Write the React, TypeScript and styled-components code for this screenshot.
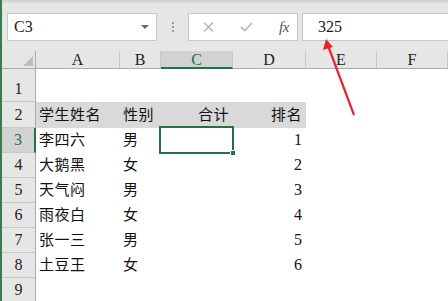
import styled, { createGlobalStyle } from 'styled-components';

const GlobalStyle = createGlobalStyle`
  * { box-sizing: border-box; }
  html, body { margin: 0; padding: 0; background: #fff; overflow: hidden; }
  body { font-family: "Liberation Serif", "Noto Sans CJK SC", serif; }
`;

const columns = ['A', 'B', 'C', 'D', 'E', 'F'];

const rows: { name?: string; sex?: string; total?: string; rank?: string; band?: boolean }[] = [
	{},
	{ name: '学生姓名', sex: '性别', total: '合计', rank: '排名', band: true },
	{ name: '李四六', sex: '男', rank: '1' },
	{ name: '大鹅黑', sex: '女', rank: '2' },
	{ name: '天气闷', sex: '男', rank: '3' },
	{ name: '雨夜白', sex: '女', rank: '4' },
	{ name: '张一三', sex: '男', rank: '5' },
	{ name: '土豆王', sex: '女', rank: '6' },
	{},
];

const selectedRow = 3;
const selectedCol = 'C';

const App = () => {
	return (
		<>
			<GlobalStyle />
			<Window>
				<TopStrip />
				<FormulaBar>
					<NameBox>
						<span>C3</span>
						<Caret />
					</NameBox>
					<Grip>
						<Dot />
						<Dot />
						<Dot />
					</Grip>
					<ButtonBox>
						<IconSlot>
							<svg width="11" height="10" viewBox="0 0 11 10">
								<path d="M1 0.5 L10 9.5 M10 0.5 L1 9.5" stroke="#b3b3b3" strokeWidth="1.4" fill="none" />
							</svg>
						</IconSlot>
						<IconSlot>
							<svg width="13" height="10" viewBox="0 0 13 10">
								<path d="M1 5 L4.8 8.6 L12 1" stroke="#bcbcbc" strokeWidth="1.8" fill="none" />
							</svg>
						</IconSlot>
						<FxLabel>fx</FxLabel>
					</ButtonBox>
					<FormulaInput>325</FormulaInput>
				</FormulaBar>

				<Sheet>
					<Corner>
						<svg width="10" height="10" viewBox="0 0 10 10">
							<polygon points="10,0 10,10 0,10" fill="#bdbdbd" />
						</svg>
					</Corner>
					{columns.map((c) => (
						<ColHead key={c} $active={c === selectedCol}>
							{c}
						</ColHead>
					))}

					{rows.map((r, i) => {
						const n = i + 1;
						return [
							<RowHead key={`h${n}`} $active={n === selectedRow}>
								{n}
							</RowHead>,
							<Cell key={`a${n}`} $band={r.band}>
								<CjkText>{r.name}</CjkText>
							</Cell>,
							<Cell key={`b${n}`} $band={r.band}>
								<CjkText>{r.sex}</CjkText>
							</Cell>,
							<Cell key={`c${n}`} $band={r.band} $right $selected={n === selectedRow}>
								<CjkText>{r.total}</CjkText>
								{n === selectedRow && (
									<Selection>
										<FillHandle />
									</Selection>
								)}
							</Cell>,
							<Cell key={`d${n}`} $band={r.band} $right>
								{r.band ? <CjkText>{r.rank}</CjkText> : r.rank}
							</Cell>,
							<Cell key={`e${n}`} />,
							<Cell key={`f${n}`} />,
						];
					})}
				</Sheet>

				<Arrow width="448" height="301" viewBox="0 0 448 301">
					<line x1="354" y1="115" x2="328.5" y2="47" stroke="#e8212b" strokeWidth="2.2" />
					<polygon points="326,39 323,50 333,47" fill="#e8212b" />
				</Arrow>
			</Window>
		</>
	);
};

export default App;

const Window = styled.div`
	position: relative;
	width: 448px;
	height: 301px;
	overflow: hidden;
	background: #e6e6e6;
	border-left: 2px solid #3b7a52;
`;

const TopStrip = styled.div`
	height: 3px;
	background: linear-gradient(#cfcfcf, #dedede);
`;

const FormulaBar = styled.div`
	display: flex;
	height: 28px;
	margin: 10px 0 10px 5px;
`;

const NameBox = styled.div`
	display: flex;
	align-items: center;
	justify-content: space-between;
	width: 150px;
	padding: 0 6px 0 6px;
	background: #fff;
	border: 1px solid #c6c6c6;
	font-size: 16px;
	color: #1a1a1a;
`;

const Caret = styled.div`
	width: 0;
	height: 0;
	border-left: 4px solid transparent;
	border-right: 4px solid transparent;
	border-top: 4px solid #6a6a6a;
	margin-right: 1px;
`;

const Grip = styled.div`
	display: flex;
	flex-direction: column;
	align-items: center;
	justify-content: center;
	gap: 2px;
	width: 31px;
`;

const Dot = styled.div`
	width: 2px;
	height: 2px;
	background: #9d9d9d;
`;

const ButtonBox = styled.div`
	display: flex;
	align-items: center;
	width: 110px;
	padding-left: 13px;
	background: #fff;
	border: 1px solid #c6c6c6;
`;

const IconSlot = styled.div`
	display: flex;
	align-items: center;
	justify-content: center;
	width: 13px;
	margin-right: 25px;
`;

const FxLabel = styled.span`
	font-style: italic;
	font-size: 15px;
	color: #555;
	margin-left: 1px;
	letter-spacing: -0.5px;
`;

const FormulaInput = styled.div`
	flex: 1;
	display: flex;
	align-items: center;
	margin-left: 4px;
	padding-left: 15px;
	background: #fff;
	border: 1px solid #c6c6c6;
	border-right: none;
	font-size: 16px;
	color: #1a1a1a;
`;

const Sheet = styled.div`
	display: grid;
	grid-template-columns: 34px 84px 41px 72px 73px 71px 1fr;
	grid-template-rows: 18px 33px 26px repeat(7, 25px);
	background: #fff;
`;

const Corner = styled.div`
	display: flex;
	align-items: flex-end;
	justify-content: flex-end;
	padding: 0 2px 2px 0;
	background: #e6e6e6;
	border-right: 1px solid #ababab;
	border-bottom: 1px solid #ababab;
`;

const ColHead = styled.div<{ $active?: boolean }>`
	display: flex;
	align-items: center;
	justify-content: center;
	padding-top: 1px;
	background: ${({ $active }) => ($active ? '#d2d2d2' : '#e6e6e6')};
	border-right: 1px solid #c6c6c6;
	border-bottom: ${({ $active }) => ($active ? '2px solid #217346' : '1px solid #ababab')};
	color: ${({ $active }) => ($active ? '#217346' : '#222')};
	font-size: 16px;
`;

const RowHead = styled.div<{ $active?: boolean }>`
	display: flex;
	align-items: flex-end;
	justify-content: center;
	padding-bottom: 3px;
	background: ${({ $active }) => ($active ? '#d2d2d2' : '#e6e6e6')};
	border-right: ${({ $active }) => ($active ? '2px solid #217346' : '1px solid #ababab')};
	border-bottom: 1px solid #c6c6c6;
	color: ${({ $active }) => ($active ? '#217346' : '#222')};
	font-size: 16px;
`;

const Cell = styled.div<{ $band?: boolean; $right?: boolean; $selected?: boolean }>`
	position: relative;
	z-index: ${({ $selected }) => ($selected ? 2 : 'auto')};
	display: flex;
	align-items: flex-end;
	justify-content: ${({ $right }) => ($right ? 'flex-end' : 'flex-start')};
	padding: 0 4px 4px 3px;
	background: ${({ $band }) => ($band ? '#d9d9d9' : '#fff')};
	color: #111;
	font-size: 16px;
	white-space: nowrap;
`;

const CjkText = styled.span`
	font-size: 15px;
	letter-spacing: 0.5px;
	line-height: 18px;
`;

const Selection = styled.div`
	position: absolute;
	top: -2px;
	left: -2px;
	right: -1px;
	bottom: -1px;
	border: 2px solid #217346;
`;

const FillHandle = styled.div`
	position: absolute;
	right: -4px;
	bottom: -4px;
	width: 6px;
	height: 6px;
	background: #217346;
	border: 1px solid #fff;
`;

const Arrow = styled.svg`
	position: absolute;
	top: 0;
	left: -2px;
	z-index: 3;
	pointer-events: none;
`;
